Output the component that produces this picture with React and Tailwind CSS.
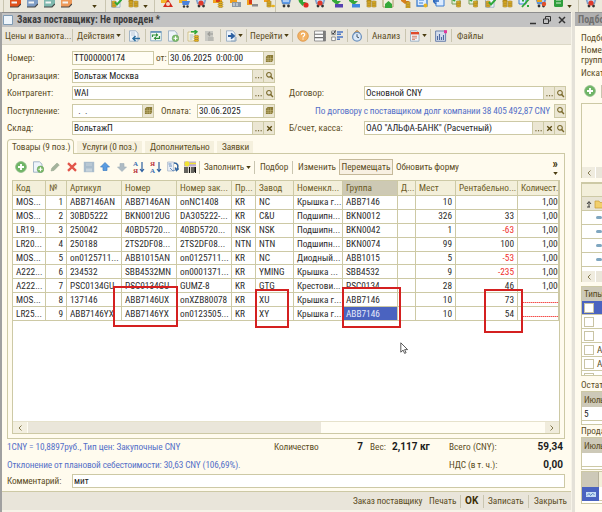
const BORDER = 'border-[#cdc9a5]';

const ROWS = [
  ['MOS...', '1', 'ABB7146AN', 'ABB7146AN', 'onNC1408', 'KR', 'NC', 'Крышка г...', 'ABB7146', '', '10', '', '1,000'],
  ['MOS...', '2', '30BD5222', 'BKN0012UG', 'DA305222-...', 'KR', 'C&U', 'Подшипн...', 'BKN0012', '', '326', '33', '1,000'],
  ['LR19...', '3', '250042', '40BD5720...', '40BD5720...', 'NSK', 'NSK', 'Подшипн...', 'BKN0042', '', '1', '-63', '1,000'],
  ['LR20...', '4', '250188', '2TS2DF08...', '2TS2DF08...', 'NTN', 'NTN', 'Подшипн...', 'BKN0074', '', '99', '100', '1,000'],
  ['MOS...', '5', 'on0125711...', 'ABB1015AN', 'on0125711...', 'KR', 'NC', 'Диодный...', 'ABB1015', '', '5', '-53', '1,000'],
  ['A222...', '6', '234532', 'SBB4532MN', 'on0001371...', 'KR', 'YMING', 'Крышка ...', 'SBB4532', '', '9', '-235', '1,000'],
  ['A222...', '7', 'PSC0134GU', 'PSC0134GU', 'GUMZ-8', 'KR', 'GTG', 'Крестови...', 'PSC0134', '', '28', '46', '1,000'],
  ['MOS...', '8', '137146', 'ABB7146UX', 'onXZB80078', 'KR', 'XU', 'Крышка г...', 'ABB7146', '', '10', '73', ''],
  ['LR25...', '9', 'ABB7146YX', 'ABB7146YX', 'on0123505...', 'KR', 'XY', 'Крышка г...', 'ABB7146', '', '10', '54', ''],
];

const COLS = [
  { title: 'Код' },
  { title: '№', right: true },
  { title: 'Артикул' },
  { title: 'Номер' },
  { title: 'Номер зак...' },
  { title: 'Пр...' },
  { title: 'Завод' },
  { title: 'Номенкл...' },
  { title: 'Группа', active: true },
  { title: 'Д...' },
  { title: 'Мест', right: true },
  { title: 'Рентабельно...', right: true },
  { title: 'Количест...', last: true },
];

const GRID =
  'grid grid-cols-[33px_21px_55px_55px_55px_24px_38px_49px_55px_18px_40px_62px_41px]';

// ── Small building blocks ──────────────────────────────────────────────────

function Sep({ className = '' }) {
  return <span className={`h-[13px] w-px shrink-0 bg-[#c9c5b0] ${className}`} />;
}

function Caret({ className = '' }) {
  return (
    <svg viewBox="0 0 6 4" className={`h-[3px] w-[5px] shrink-0 ${className}`}>
      <path d="M0 0h6L3 4z" fill="#4a3c10" />
    </svg>
  );
}

function Icon({ name, className = '' }) {
  return (
    <svg viewBox="0 0 12 12" className={`h-3 w-3 shrink-0 ${className}`} fill="none">
      {ICONS[name]}
    </svg>
  );
}

const coins = (x, y) => (
  <g fill="#e8b422" stroke="#8a6a10" strokeWidth=".5">
    <ellipse cx={x} cy={y + 4} rx="2.4" ry="1.1" />
    <ellipse cx={x} cy={y + 2} rx="2.4" ry="1.1" />
    <ellipse cx={x} cy={y} rx="2.4" ry="1.1" />
  </g>
);

const page = (
  <path d="M1.5.8h6l2.5 2.4v8H1.5z" fill="#eef4fa" stroke="#8fa6bd" strokeWidth=".8" />
);

const printer = (c) => (
  <g>
    <path d="M1 4 3 1h9v7l-3 3H1z" fill={c} />
    <path d="M2.5 5.500h5.500v2H2.500z" fill="#f4f4f4" />
    <path d="M1 11h8l3-3" stroke="#444" strokeWidth="1.200" />
  </g>
);

const cart = (c) => (
  <g>
    <path d="M1 3h10l-1.5 5h-7z" fill={c} stroke="#4c6f9c" strokeWidth=".5" />
    <path d="M3 5h6" stroke="#fff" />
    <circle cx="4" cy="10" r="1.4" fill="#333" />
    <circle cx="8.5" cy="10" r="1.4" fill="#333" />
  </g>
);

const ICONS = {
  printRed: printer('#e0521c'),
  printBlue: printer('#7d9cc4'),
  printTeal: printer('#7fb8ae'),
  printOrange: printer('#ee9a5a'),
  cart: cart('#5c9ae8'),
  cartRed: <g>{cart('#8bb6e8')}<circle cx="6" cy="7" r="2.6" fill="#e03a2c" /></g>,
  cartGold: <g><path d="M1 2h8v5H1z" fill="#f0b428" />{<path d="M4 5h8l-1.500 4h-6z" fill="#4a82dc" />}<circle cx="6" cy="10.500" r="1.200" fill="#333" /><circle cx="9.500" cy="10.500" r="1.200" fill="#333" /></g>,
  cartUser: <g>{cart('#5c9ae8')}<path d="M2 2h5v4H2z" fill="#e8a41c" /><circle cx="9" cy="8" r="2.200" fill="#e0502c" /></g>,
  people: <g><path d="M0 2h6v5H0z" fill="#f0b428" /><path d="M7 3l5 8H2z" fill="#d42a1c" /><circle cx="7" cy="8" r="2" fill="#f4d9c4" /></g>,
  moneyRed: <g><path d="M1 2h9v5H1z" fill="#f0a01c" /><path d="M4 3h4v3H4z" fill="#d83a1c" />{coins(8.5, 6.5)}</g>,
  moneyGray: <g><path d="M1 2h7v5H1z" fill="#f0a01c" /><path d="M3 6h9v5H3z" fill="#8b98a5" /><path d="M5 7v3M8 7v3" stroke="#e8edf0" /></g>,
  moneyKey: <g><path d="M1 1h5v8H1z" fill="#f0a01c" /><path d="M3 3h3v5H3z" fill="#d83a1c" /><path d="M6 8h6v2.500H6z" fill="#8b8b8b" /></g>,
  moneyCoin: <g><path d="M1 2h6v4H1z" fill="#f0a01c" />{coins(6, 6)}<ellipse cx="10" cy="10" rx="2" ry="1.2" fill="#e8b422" /></g>,
  docCheck: <g>{page}{coins(4, 6)}<path d="m5 6 2 2.5L12 3" stroke="#2ea83a" strokeWidth="2" /></g>,
  coins: <g>{coins(4, 1)}{coins(4, 6)}{coins(9, 6)}</g>,
  arrowRed: <g><path d="M1 2h5v4h3l-3.5 4L2 6z" fill="#35a83a" /><circle cx="9" cy="9" r="2.6" fill="#df2b22" /></g>,
  arrowBlue: <g><path d="M1 1h5v4h4L6 9 1 5z" fill="#35a83a" /><path d="M4 8h8v3.5H4z" fill="#5742b0" /></g>,
  arrowSky: <g><path d="M1 1h5v4h4L6 9 1 5z" fill="#35a83a" /><path d="M4 8h8v3.5H4z" fill="#3f86e0" /></g>,
  house: <g><path d="M1 3h10v8H1z" fill="#f3f0df" stroke="#a89c66" /><path d="m3 8 3.5-3L10 8v4H3z" fill="#35a83a" /></g>,
  arrowCoin: <g><path d="M2 0h5v5h4L6 8 2 5z" fill="#d8801c" />{coins(9, 7)}</g>,
  docBlue: <g><path d="M1 1h10v9H1z" fill="#dcecff" stroke="#3d7fd0" strokeWidth="1.3" /><path d="M3 4h5M3 7h4" stroke="#3d7fd0" /><circle cx="9.5" cy="9.5" r="2" fill="#e8b422" /></g>,
  docArrow: <g><path d="M3 1h8v9H3z" fill="#dcecff" stroke="#3d7fd0" /><path d="M0 5h6M3 2 0 5l3 3" stroke="#2b68be" strokeWidth="1.4" /></g>,
  docCoin: <g><path d="M2 1h8v7H2z" fill="#dff0d8" stroke="#7ca05a" />{coins(8.5, 6)}<path d="m1 2 4 3" stroke="#35a83a" strokeWidth="2" /></g>,
  percent: <g><path d="M1 0h7v8H1z" fill="#dcecff" stroke="#3d7fd0" /><path d="m4 11 7-8M4 4.5h2M9 10h2" stroke="#2ea83a" strokeWidth="1.8" /></g>,
  book: <g><rect x="2" y="0" width="9" height="11" rx="1.5" fill="#2f9e3c" /><path d="M4 4h5M4 7h5" stroke="#d8f0d4" strokeWidth="1.2" /></g>,
  // form toolbar
  docOut: <g>{page}<path d="M3 3h4M3 5h4" stroke="#a8b8c8" strokeWidth=".7" /><path d="M12 8.5H5M7.5 6 5 8.5 7.5 11" stroke="#2c6e9e" strokeWidth="1.5" /></g>,
  refresh: <g><path d="M.7 1.5h10.6v9.3H.7z" fill="#f3faf3" stroke="#8fb0c8" /><path d="M.7 2h10.6" stroke="#5f8fb5" strokeWidth="1.6" /><path d="M2.500 7V5h4M9.500 6v2.300h-4" stroke="#2f8f3a" strokeWidth="1.2" /><path d="m6 3 2.400 2L6 7zM6 6.300 3.600 8.300l2.400 2z" fill="#2f8f3a" /></g>,
  copyPlus: <g>{page}<circle cx="8.5" cy="8.3" r="3.3" fill="#7dbb6a" stroke="#5d9a50" strokeWidth=".5" /><path d="M8.5 6.3v4M6.5 8.3h4" stroke="#fff" strokeWidth="1.1" /></g>,
  post: <g><path d="M1 2h7v9H1z" fill="#fdfbe8" stroke="#c8b878" strokeWidth=".8" /><path d="M2.5 5h4M2.5 7h4M2.5 9h3" stroke="#8fa6bd" strokeWidth=".8" /><path d="M4 1.8h5M7.5 0l2.5 1.8L7.5 4" stroke="#2ea83a" strokeWidth="1.4" />{coins(9.5, 6.5)}</g>,
  postOff: <g><path d="M2 1h8v10H2z" fill="#c9c9c3" /><path d="M10 4H5M7 2 5 4l2 2" stroke="#9a9a96" strokeWidth="1.2" /><path d="M5 8h6M5 10h6" stroke="#a9a9a4" /></g>,
  goto: <g>{page}<path d="M3 6h5M6 3.3 9 6 6 8.7" stroke="#2c5fa0" strokeWidth="1.8" /><path d="M6 11h5V7" stroke="#8fa6bd" /></g>,
  help: <g><circle cx="6" cy="6" r="5.3" fill="#f3b264" stroke="#d99548" strokeWidth=".8" /><path d="M4.3 4.8c0-2.4 3.5-2.2 3.4-.2C7.6 6 6 5.9 6 7.4M6 8.4v1.2" stroke="#fff" strokeWidth="1.2" /></g>,
  list: <g><path d="M.5 1h11v10H.5z" fill="#fafafa" stroke="#7d7d7d" strokeWidth=".8" /><path d="M.5 4.3h11M.5 7.6h11" stroke="#6d6d6d" strokeWidth="1.1" /><path d="M9 1h2.5v10H9z" fill="#7c7c7c" /></g>,
  checks: <g><path d="M.7 1h3.6v3.6H.7zM.7 7h3.6v3.6H.7z" fill="#fff" stroke="#777" strokeWidth=".8" /><path d="m1 2.5 1.3 1.6L4.5.5" stroke="#222" /><path d="M6 2h6M6 4.3h4M6 7h6M6 9.3h3" stroke="#4b76c4" strokeWidth="1.4" /></g>,
  clock: <g><path d="M3 3 6 .5 9 3" fill="#e0a860" stroke="#b88444" /><circle cx="6" cy="6.8" r="4.4" fill="#dbe9f8" stroke="#6f93bd" strokeWidth="1.3" /><path d="M6 4.2v2.8l2 .8" stroke="#345" strokeWidth=".9" /></g>,
  xml: <g>{page}<path d="M2 3.2h8" stroke="#e04a2c" strokeWidth="2.4" /><path d="M3 6.3h5M3 8h5M3 9.6h3" stroke="#d0694f" strokeWidth=".8" /></g>,
  report: <g><path d="M.6 1h10v10.3H.6z" fill="#d3dcec" stroke="#6d83ad" strokeWidth="1" /><path d="M2.5 10V6M4.5 10V4M6.5 10V7M8.5 10V5" stroke="#4d68a0" strokeWidth="1.1" /><path d="M9 .2h3v3H9z" fill="#e0389c" /></g>,
  // table toolbar
  add: <g><circle cx="6" cy="6" r="5.4" fill="#6fb566" stroke="#8dbb86" strokeWidth=".8" /><path d="M6 3v6M3 6h6" stroke="#fff" strokeWidth="1.9" /></g>,
  pencil: <path d="m2 10 .8-3L8 2l2.3 2L5 9.4z" fill="#a4b39c" stroke="#94a58c" strokeWidth=".5" />,
  cross: <path d="m2 2.2 8 7.6M10 2.2 2 9.8" stroke="#e2554a" strokeWidth="2.3" />,
  save: <g><path d="M.8.8h10.4v10.4H.8z" fill="#a9bccc" /><path d="M3 7.5h6v3H3z" fill="#c6d3dc" /><path d="M3 2h6v3H3z" fill="#b9c8d4" /></g>,
  up: <path d="m6 1.500 4.500 4.500H8v3.500H4V6H1.500z" fill="#5a9be0" stroke="#3b7cc4" strokeWidth=".7" />,
  down: <path d="m6 10.500 4.500-4.500H8V2.500H4V6H1.500z" fill="#aebbc4" stroke="#a0aeb8" strokeWidth=".6" />,
  sortAsc: <g><path d="M9 1v9M7 8l2 2.5L11 8" stroke="#2c5fa0" strokeWidth="1.2" /><text x="0" y="5.4" fontSize="7" fontWeight="bold" fill="#3b6fb0" fontFamily="Liberation Serif, serif">А</text><text x="0" y="11.6" fontSize="7" fontWeight="bold" fill="#b8323a" fontFamily="Liberation Serif, serif">Я</text></g>,
  sortDesc: <g><path d="M9 1v9M7 8l2 2.5L11 8" stroke="#2c5fa0" strokeWidth="1.2" /><text x="0" y="5.4" fontSize="7" fontWeight="bold" fill="#b8323a" fontFamily="Liberation Serif, serif">Я</text><text x="0" y="11.6" fontSize="7" fontWeight="bold" fill="#3b6fb0" fontFamily="Liberation Serif, serif">А</text></g>,
  turn: <g><path d="M.6 1h6v9h-6z" fill="#e8eef6" stroke="#a3b1c4" strokeWidth=".7" /><path d="M1.500 3h3M2 5h3M3 7l3 3 3-1.500" stroke="#5f86b8" strokeWidth=".9" /><path d="M7 2c4 0 4.500 3 3.200 6M11.800 7.500 9.500 9.500 8.200 6.500" stroke="#31649e" strokeWidth="1.500" /></g>,
  barcode: <g><path d="M0 .5h12v5H0z" fill="#b9a8d8" /><circle cx="3" cy="2.800" r="2.600" fill="#f1e335" /><path d="M6 2.500h6" stroke="#f1e335" strokeWidth="1.500" /><path d="M1 6v6M3 6v6M5.500 6v6M8 6v6M10 6v6M11.500 6v6" stroke="#111" strokeWidth="1.300" /></g>,
};

const SMALL = {
  dots: <path d="M1.500 7.500h1.300M4.400 7.500h1.300M7.300 7.500h1.300" stroke="#5b4a12" strokeWidth="1.300" />,
  search: <g stroke="#7a6a2c" strokeWidth="1.200"><circle cx="4.400" cy="4.200" r="2.600" /><path d="m6.300 6.200 2.500 2.600" strokeWidth="1.600" /></g>,
  clear: <path d="m2.500 2.500 5 5M7.500 2.500l-5 5" stroke="#5b4a12" strokeWidth="1.500" />,
  calendar: <g><path d="M3 1h6v6.500L7.500 9H1V3z" fill="#8a7a36" /><path d="M1 5h8M1 7h8M3.500 2v7M6 2v7" stroke="#cfc58e" strokeWidth=".5" /></g>,
};

function FieldButton({ name }) {
  return (
    <span className={`flex h-full w-[11px] shrink-0 items-center justify-center border-l bg-[#ebe6d3] ${BORDER}`}>
      <svg viewBox="0 0 10 10" className="h-[9px] w-[9px]" fill="none">
        {SMALL[name]}
      </svg>
    </span>
  );
}

function Field({ className = '', bg = 'bg-white', buttons = [], children }) {
  return (
    <div className={`flex h-[14px] shrink-0 items-center border text-[#1c1c1c] ${BORDER} ${bg} ${className}`}>
      <span className="flex-1 overflow-hidden whitespace-pre pl-px leading-3">{children}</span>
      {buttons.map((b) => (
        <FieldButton key={b} name={b} />
      ))}
    </div>
  );
}

// ── Application toolbar above the windows ──────────────────────────────────

const TOP_LEFT = ['printRed', 'printBlue', 'printTeal', 'printOrange'];
const TOP_MID = ['people', 'cartGold', 'cartRed', 'moneyRed', 'moneyGray', 'moneyKey', 'moneyCoin'];
const TOP_RIGHT = [
  'cart', 'arrowRed', 'cartRed', 'arrowBlue', 'arrowSky', 'coins', 'house', 'arrowCoin', 'docBlue',
  'docArrow', 'docCoin', 'docCoin', 'docCheck', 'coins', 'percent', 'cartUser', 'book',
];

function TopBar() {
  return (
    <div className="flex h-3 shrink-0 items-start overflow-hidden bg-[#ece9dc]">
      <Sep className="ml-[3px] mr-[5px] h-[7px]" />
      <div className="flex w-[79px] gap-[5px]">
        {TOP_LEFT.map((n) => <Icon key={n} name={n} className="-mt-1" />)}
      </div>
      <Caret className="ml-[4px] mt-[5px]" />
      <Sep className="ml-2 mr-[4px] h-[7px]" />
      <Icon name="docCheck" className="-mt-1" />
      <Icon name="coins" className="-mt-1 ml-[5px]" />
      <Caret className="ml-[4px] mt-[5px]" />
      <Sep className="ml-[6px] mr-[6px] h-[7px]" />
      <div className="flex w-[114px] gap-[5px]">
        {TOP_MID.map((n) => <Icon key={n} name={n} className="-mt-1" />)}
      </div>
      <Sep className="mr-1 h-[7px]" />
      <div className="flex w-[284px] justify-between">
        {TOP_RIGHT.map((n, i) => <Icon key={i} name={n} className="-mt-1" />)}
      </div>
      <Caret className="ml-[3px] mt-[5px]" />
      <Sep className="ml-[6px] mr-[6px] h-[7px]" />
      <Icon name="cartRed" className="-mt-1" />
    </div>
  );
}

// ── Order window ───────────────────────────────────────────────────────────

function TitleBar() {
  return (
    <div className="flex h-[15px] shrink-0 items-center border-t border-[#8d8d8d] bg-[#c2c2c2] pl-px pr-[4px]">
      <svg viewBox="0 0 10 10" className="h-[10px] w-[10px]">
        <path d="M.5.5h9v9h-9z" fill="#eef5fb" stroke="#7f9bb4" />
      </svg>
      <span className="ml-[4px] whitespace-nowrap text-[10px] font-bold text-[#3c3c3c] font-stretch-[81%]">
        Заказ поставщику: Не проведен *
      </span>
      <svg viewBox="0 0 38 10" className="ml-auto h-[10px] w-[38px]" fill="none" stroke="#333">
        <path d="M1 8.500h6" strokeWidth="1.500" />
        <path d="M14.500 4h5v4.500h-5zM16.500 4V1.500h5V6h-2" />
        <path d="m30 2 6 6M36 2l-6 6" strokeWidth="1.500" />
      </svg>
    </div>
  );
}

function FormToolbar() {
  return (
    <div className="flex h-[18px] shrink-0 items-center border-b border-[#dcd8c6] bg-[#ebe7dc] pl-[3px] text-[#5c4d1e]">
      <span className="w-[67px] whitespace-nowrap">Цены и валюта...</span>
      <Sep />
      <span className="ml-1 w-[39px]">Действия</span>
      <Caret />
      <Sep className="ml-[3px] mr-[3px]" />
      <Icon name="docOut" />
      <Sep className="ml-[5px] mr-[4px]" />
      <Icon name="refresh" />
      <Icon name="copyPlus" className="ml-[5px]" />
      <Sep className="ml-[4px] mr-[3px]" />
      <Icon name="post" />
      <Icon name="postOff" className="ml-[4px]" />
      <Sep className="ml-[5px] mr-[4px]" />
      <Icon name="goto" />
      <Caret className="ml-[1px]" />
      <Sep className="ml-[3px] mr-[3px]" />
      <span className="w-[34px]">Перейти</span>
      <Caret />
      <Sep className="ml-[3px] mr-[4px]" />
      <Icon name="help" />
      <Icon name="list" className="ml-[5px]" />
      <Icon name="checks" className="ml-[5px]" />
      <Sep className="ml-[4px] mr-[3px]" />
      <Icon name="clock" />
      <Sep className="ml-[4px] mr-[4px]" />
      <span className="w-[33px]">Анализ</span>
      <Sep className="mr-[3px]" />
      <Icon name="xml" />
      <Caret className="ml-[1px]" />
      <Sep className="ml-[3px] mr-[4px]" />
      <Icon name="report" />
      <Sep className="ml-[4px] mr-[5px]" />
      <span>Файлы</span>
    </div>
  );
}

function HeaderForm() {
  return (
    <div className="flex h-[84px] shrink-0 justify-between pr-[5px]">
      <div className="flex w-[268px] flex-col gap-[3.5px]">
        <div className="flex items-center">
          <span className="w-[65px]">Номер:</span>
          <Field className="w-[82px]" bg="bg-[#fffdf4]">ТТ000000174</Field>
          <span className="w-[14px] pl-[2px]">от:</span>
          <Field className="w-[107px]" buttons={['calendar']}>30.06.2025  0:00:00</Field>
        </div>
        <div className="flex items-center">
          <span className="w-[65px]">Организация:</span>
          <Field className="w-[203px]" buttons={['dots', 'search']}>Вольтаж Москва</Field>
        </div>
        <div className="flex items-center">
          <span className="w-[65px]">Контрагент:</span>
          <Field className="w-[203px]" buttons={['dots', 'search']}>WAI</Field>
        </div>
        <div className="flex items-center">
          <span className="w-[65px]">Поступление:</span>
          <Field className="w-[82px]" buttons={['calendar']}>{'  .  .'}</Field>
          <span className="w-[43px] pl-[7px]">Оплата:</span>
          <Field className="w-[78px]" buttons={['calendar']}>30.06.2025</Field>
        </div>
        <div className="flex items-center">
          <span className="w-[65px]">Склад:</span>
          <Field className="w-[203px]" buttons={['dots', 'clear']}>ВольтажП</Field>
        </div>
      </div>
      <div className="flex w-[277px] flex-col gap-[3.5px] pt-[35px]">
        <div className="flex items-center">
          <span className="w-[75px]">Договор:</span>
          <Field className="w-[202px]" buttons={['dots', 'search']}>Основной CNY</Field>
        </div>
        <div className="flex items-center justify-end gap-[4px]">
          <span className="whitespace-nowrap tracking-[-0.13px] text-[#5570c8]">
            По договору с поставщиком долг компании 38 405 492,87 CNY
          </span>
          <span className={`flex h-[14px] w-3 border border-l-0 ${BORDER}`}>
            <FieldButton name="search" />
          </span>
        </div>
        <div className="flex items-center">
          <span className="w-[75px]">Б/счет, касса:</span>
          <Field className="w-[202px]" buttons={['dots', 'clear', 'search']}>ОАО "АЛЬФА-БАНК" (Расчетный)</Field>
        </div>
      </div>
    </div>
  );
}

function Tabs() {
  return (
    <div className="mt-[4px] flex h-[14px] shrink-0 items-end gap-[3px] text-[#5c4d1e]">
      <span className={`z-10 -mb-px flex h-[15px] w-[67px] items-center whitespace-nowrap rounded-t-sm border border-b-0 bg-[#fffbee] pl-1 tracking-[-0.1px] ${BORDER}`}>
        Товары (9 поз.)
      </span>
      <span className="flex h-[12px] w-[65px] items-center whitespace-nowrap bg-[#f5f0dd] pl-[5px] tracking-[-0.1px]">Услуги (0 поз.)</span>
      <span className="flex h-[12px] w-[69px] items-center bg-[#f5f0dd] pl-[5px] tracking-[-0.1px]">Дополнительно</span>
      <span className="flex h-[12px] w-[36px] items-center bg-[#f5f0dd] pl-[5px] tracking-[-0.1px]">Заявки</span>
    </div>
  );
}

const TABLE_ICONS = [
  'add', 'copyPlus', 'pencil', 'cross', 'save', 'up', 'down', 'sortAsc', 'sortDesc', 'turn', 'barcode',
];

function TableToolbar() {
  return (
    <div className="flex h-[26px] shrink-0 items-center pl-[3px] text-[#5c4d1e]">
      <div className="flex gap-[4.900px]">
        {TABLE_ICONS.map((n) => <Icon key={n} name={n} />)}
      </div>
      <Sep className="ml-[3px] mr-[4px]" />
      <span className="w-[42px] tracking-[-0.1px]">Заполнить</span>
      <Caret />
      <Sep className="ml-[3px] mr-[5px]" />
      <span className="w-[32px] tracking-[-0.1px]">Подбор</span>
      <Sep className="mr-[5px]" />
      <span className="w-[41px]">Изменить</span>
      <span className="flex h-4 w-[54px] items-center justify-center border border-[#c5b99a] bg-[#f8f0e2]">Перемещать</span>
      <span className="ml-[3px] whitespace-nowrap tracking-[-0.1px]">Обновить форму</span>
      <div className="ml-auto mr-[2px] flex flex-col items-center text-[#3c2f08]">
        <span className="text-xs leading-[9px] font-bold">»</span>
        <Caret className="mt-[3px]" />
      </div>
    </div>
  );
}

function cellClass(col, value, selected) {
  const pad = col.last ? (value ? 'pl-[24px]' : 'pl-[3px]') : col.right ? 'justify-end pr-[3px]' : 'pl-[3px]';
  const color = selected ? 'bg-[#4a63c0] text-[#e4e8fa]' : value.startsWith('-') ? 'text-[#f0302c]' : '';
  return `flex items-center overflow-hidden whitespace-nowrap border-b border-r border-[#cdc9a5] ${pad} ${color}`;
}

function OrderTable() {
  return (
    <div className={`flex flex-1 flex-col overflow-hidden border bg-white ${BORDER}`}>
      <div className={`h-[15px] shrink-0 bg-[#f3efda] text-[#6b5b26] ${GRID}`}>
        {COLS.map((c) => (
          <span
            key={c.title}
            className={`flex items-center overflow-hidden whitespace-nowrap border-b border-r border-[#cdc9a5] pl-[3px] ${c.active ? 'bg-[#cdc9b4]' : ''} ${c.last ? 'tracking-[-0.15px]' : ''}`}
          >
            {c.title}
          </span>
        ))}
      </div>
      {ROWS.map((row, r) => (
        <div key={row[1]} className={`h-[13.900px] shrink-0 text-[#2c2c2c] font-stretch-[78%] ${GRID}`}>
          {row.map((v, i) => (
            <span key={i} className={cellClass(COLS[i], v, r === 8 && i === 8)}>
              {COLS[i].last && !v ? <RequiredMark /> : v}
            </span>
          ))}
        </div>
      ))}
      <div className="mt-auto flex h-3 shrink-0 items-stretch border-t border-[#e6e2cc] bg-[#fffdf4]">
        <span className="flex w-[14px] items-center justify-center bg-[#f3efe0]"><Chevron /></span>
        <span className="ml-px w-[293px] bg-[#eae6da]" />
        <span className="ml-auto flex w-[14px] items-center justify-center bg-[#f0ecdc]"><Chevron flip /></span>
      </div>
    </div>
  );
}

// Underline of an empty required cell
function RequiredMark() {
  return (
    <svg viewBox="0 0 38 1" className="mt-[6px] h-px w-[38px] shrink-0">
      <path d="M0 .5h38" stroke="#f4504c" strokeDasharray="1.500 .5" />
    </svg>
  );
}

function Chevron({ flip }) {
  return (
    <svg viewBox="0 0 4 6" className={`h-[6px] w-1 ${flip ? 'rotate-180' : ''}`} fill="none">
      <path d="M3.500.5 1 3l2.500 2.500" stroke="#857a50" />
    </svg>
  );
}

function Totals() {
  return (
    <div className="mt-px shrink-0 pr-[8px]">
      <div className="flex h-[14px] items-center">
        <span className="w-[267px] whitespace-nowrap tracking-[-0.08px] text-[#5570c8]">1CNY = 10,8897руб., Тип цен: Закупочные CNY</span>
        <span className="w-[62px] tracking-[-0.1px]">Количество</span>
        <b className="w-[27px] text-right text-[10px] text-[#1c1c1c] font-stretch-100%">7</b>
        <span className="ml-[7px] w-[22px]">Вес:</span>
        <b className="w-[57px] whitespace-nowrap text-[10px] text-[#1c1c1c] font-stretch-[96%]">2,117 кг</b>
        <span>Всего (CNY):</span>
        <b className="ml-auto text-[10px] text-[#1c1c1c] font-stretch-[92%]">59,34</b>
      </div>
      <div className="mt-[4px] flex h-[14px] items-center">
        <span className="w-[442px] tracking-[-0.13px] text-[#5570c8]">Отклонение от плановой себестоимости: 30,63 CNY (106,69%).</span>
        <span className="tracking-[-0.1px]">НДС (в т. ч.):</span>
        <b className="ml-auto text-[10px] text-[#1c1c1c] font-stretch-[92%]">0,00</b>
      </div>
    </div>
  );
}

function Footer() {
  return (
    <div className="flex h-[19px] shrink-0 items-center justify-end border-t border-[#cdc9a5] bg-[#e9e5da] pr-[5px] text-[#5c4d1e]">
      <span className="w-[76px] whitespace-nowrap tracking-[-0.1px]">Заказ поставщику</span>
      <span className="w-[31px]">Печать</span>
      <Sep />
      <b className="w-[22px] pl-[4px] text-[10px] text-[#3c2f08] font-stretch-[96%]">OK</b>
      <Sep />
      <span className="w-[44px] pl-[4px]">Записать</span>
      <Sep />
      <span className="w-[37px] pl-[5px]">Закрыть</span>
    </div>
  );
}

// Red frames drawn over the table by hand
const MARKS = [
  'left-[113px] top-[286px] w-[65px] h-[41px]',
  'left-[255px] top-[289px] w-[34px] h-[39px]',
  'left-[342px] top-[287px] w-[59px] h-[41px]',
  'left-[484px] top-[289px] w-[39px] h-[44px]',
];

function OrderWindow() {
  return (
    <div className="flex w-[571px] shrink-0 flex-col border-l-2 border-[#a0a0a0] bg-[#fffbee]">
      <TitleBar />
      <FormToolbar />
      <div className="flex flex-1 flex-col pl-[5px] pt-[6px]">
        <HeaderForm />
        <Tabs />
        <div className={`mr-[6px] flex h-[286px] shrink-0 flex-col border px-[4px] pb-1 ${BORDER}`}>
          <TableToolbar />
          <OrderTable />
        </div>
        <Totals />
        <div className="mt-[2px] flex items-center">
          <span className="w-[65px] tracking-[-0.1px]">Комментарий:</span>
          <Field className="w-[493px]">мит</Field>
        </div>
      </div>
      <Footer />
      <div className="h-[2px] shrink-0 bg-[#f6f3e8]" />
    </div>
  );
}

// ── Picking window, cut by the screen edge ─────────────────────────────────

function Check() {
  return <span className="h-[10px] w-[10px] shrink-0 border border-[#c9c4a4] bg-white" />;
}

function PanelScroll() {
  return (
    <div className="flex h-[11px] shrink-0 bg-[#eae6da]">
      <span className="flex w-[14px] items-center justify-center border-r border-white bg-[#f0ecdf]"><Chevron /></span>
    </div>
  );
}

function PickPanel() {
  const line = 'border-b border-[#cdc9a5]';
  return (
    <div className="flex flex-1 flex-col overflow-hidden bg-[#fffbee] whitespace-nowrap">
      <div className="flex h-[14px] shrink-0 items-center border-t border-[#9a9a9a] bg-[#b0b0b0] pl-[3px] text-[10px] font-bold text-[#707070] font-stretch-[85%]">
        Подбор
      </div>
      <div className="flex flex-1 flex-col pl-[6px]">
        <div className="mt-[6px] leading-3">Подбор</div>
        <div className="mt-[1px] leading-[10px]">Номенкл.<br />группа:</div>
        <div className="mt-[2px] leading-3">Искать</div>
        <div className="mt-[5px] flex h-[14px] items-center pl-[3px]">
          <Icon name="add" />
          <Sep className="ml-[5px]" />
        </div>
        <div className={`mt-[5px] flex h-[75px] shrink-0 flex-col justify-end border-l border-t ${BORDER}`}>
          <PanelScroll />
        </div>
        <div className={`mt-[4px] shrink-0 border-l border-t-2 ${BORDER} bg-white`}>
          <div className={`h-[13px] bg-[#f3efda] ${line}`} />
          <div className={`flex h-[14px] items-center bg-[#e8e4d4] pl-[4px] ${line}`}>
            <svg viewBox="0 0 20 10" className="h-[10px] w-5 shrink-0" fill="none">
              <path d="M3 8V3M1 5l2-2.500L5 5M1 8h3" stroke="#3c3c3c" />
              <path d="M9 2h4l1 1.500h8V9H9z" fill="#f2cf6b" stroke="#c79c38" strokeWidth=".7" />
            </svg>
          </div>
          {[0, 1, 2, 3].map((i) => (
            <div key={i} className={`flex h-[14px] items-center pl-[14px] ${line}`}>
              <span className="h-[3px] w-2 rounded-sm bg-[#7fa6c0]" />
            </div>
          ))}
          <div className="h-[4px]" />
          <PanelScroll />
        </div>
        <div className={`mt-[4px] h-[90px] shrink-0 overflow-hidden border border-r-0 bg-white ${BORDER}`}>
          <div className="flex h-[14px] items-center bg-[#cdc9b8] pl-[2px] tracking-[-0.2px]">Типы</div>
          {['', '', '', 'Ав', 'Ав', ''].map((t, i) => (
            <div key={i} className={`flex h-[14px] items-center gap-[3px] pl-[2px] ${line} ${i === 0 ? 'bg-[#4a63c0]' : ''}`}>
              <Check />
              {t}
            </div>
          ))}
        </div>
        <div className="mt-[3px] leading-3">Остатки</div>
        <div className={`h-[34px] shrink-0 border border-r-0 bg-white ${BORDER}`}>
          <div className="flex h-[15px] items-center bg-[#cdc9b8] pl-[2px] tracking-[-0.3px]">Июль</div>
          <div className={`flex h-[14px] items-center pl-[2px] text-[#1c1c1c] ${line}`}>5</div>
        </div>
        <div className="leading-3">Продажи</div>
        <div className={`h-[33px] shrink-0 border border-r-0 bg-white ${BORDER}`}>
          <div className="flex h-[15px] items-center bg-[#cdc9b8] pl-[2px] tracking-[-0.3px]">Июль</div>
          <div className={`h-[14px] ${line}`} />
        </div>
        <div className={`mt-px grid h-[33px] shrink-0 grid-cols-[17px_1fr] grid-rows-[15px_14px] border border-r-0 bg-white ${BORDER}`}>
          <span className="border-r border-[#b5b09a] bg-[#cdc9b8]" />
          <span className="bg-[#f3efda]" />
          <span className="flex items-center justify-center bg-[#4a63c0]">
            <svg viewBox="0 0 10 5" className="h-[5px] w-[10px]" fill="none">
              <path d="M0 0h10v5H0z" fill="#c6dcf4" />
              <path d="m1 3.500 2-2 1.500 2 2-2 2 1" stroke="#3b6fb0" strokeWidth=".8" />
            </svg>
          </span>
          <span className={line} />
        </div>
      </div>
    </div>
  );
}

export default function App() {
  return (
    <div className="relative flex h-[512px] w-[602px] flex-col overflow-hidden bg-[#e9e5da] font-['Roboto',sans-serif] text-[9.300px] leading-3 text-[#5c4d1e] font-stretch-75%">
      <TopBar />
      <div className="flex flex-1 overflow-hidden">
        <OrderWindow />
        <div className="w-[4px] shrink-0 border-l border-[#f6f3e8] bg-[#e4e1d8]" />
        <PickPanel />
      </div>
      {MARKS.map((m) => (
        <div key={m} className={`absolute border-2 border-[#d42020] ${m}`} />
      ))}
      <svg viewBox="0 0 8 12" className="absolute left-[400px] top-[342px] h-3 w-2">
        <path d="M.8.8v9.400l2.300-2.100 1.500 3.300 1.500-.7-1.500-3.100h3z" fill="#fff" stroke="#333" strokeWidth=".8" />
      </svg>
    </div>
  );
}
